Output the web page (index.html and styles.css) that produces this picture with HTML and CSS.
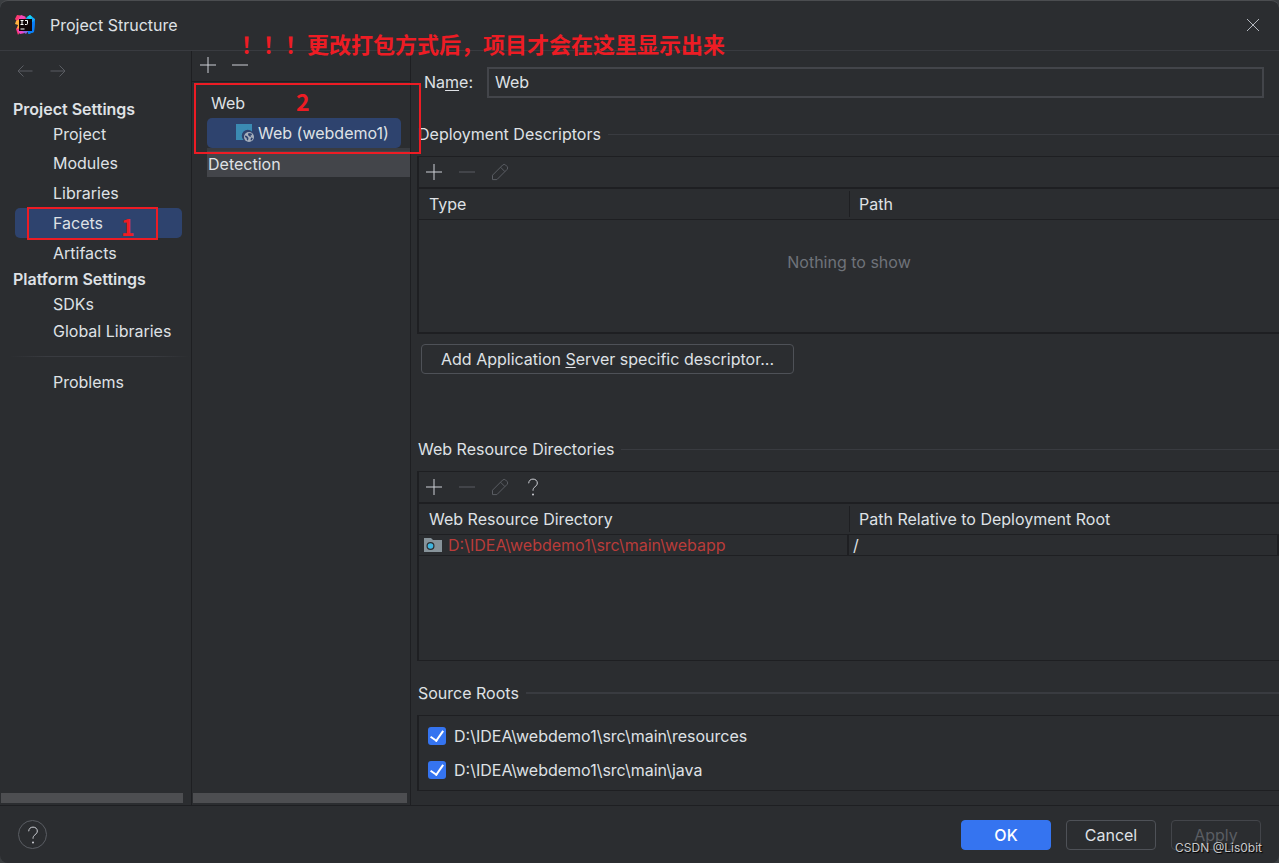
FILE: index.html
```html
<!DOCTYPE html>
<html lang="en">
<head>
<meta charset="utf-8">
<title>Project Structure</title>
<link rel="stylesheet" href="styles.css">
</head>
<body>
<svg class="defs" aria-hidden="true">
  <symbol id="plus" viewBox="0 0 18 18"><path d="M9 1v16M1 9h16"/></symbol>
  <symbol id="minus" viewBox="0 0 18 18"><path d="M1 9h16"/></symbol>
  <symbol id="pencil" viewBox="0 0 18 18"><path d="M1.500 12.200 11.700 2q1.500-1.300 2.900 0l1.500 1.500q1.300 1.500 0 2.900L5.900 16.600H1.500zM9.500 4.200l4.400 4.400"/></symbol>
  <symbol id="question" viewBox="0 0 18 18"><path d="M4.700 5.300C4.800 2.600 6.500 1.100 9 1.100s4.300 1.600 4.300 3.900c0 1.700-.8 2.600-2.200 3.700C9.700 9.800 9 10.700 9 12.700"/><circle class="dot" cx="9" cy="16.500" r="1"/></symbol>
</svg>
<div class="dialog">
  <header class="titlebar">
    <svg class="logo" viewBox="0 0 20 20" aria-hidden="true">
      <path fill="#fc3b70" d="M2 0 9 1 14 7 8 13 3 20 1 14 4 9 0 4z"/>
      <path fill="#ffb23e" d="M1 6 6 3 7 12 2 14 3 10 0 9z"/>
      <path fill="#f446b8" d="M6 0 11 2 8 5 3 5z"/>
      <path fill="#16a7f7" d="M11 3 15 0 20 4 19 17 14 19 11 15z"/>
      <path fill="#12d4ee" d="M12 2 15 0 17 2 15 5z"/>
      <path fill="#087cfa" d="M14 10 20 5 19 17 13 19z"/>
      <path fill="#ee45c5" d="M2 15 8 14 10 18 5 19z"/>
      <path fill="#8a63e8" d="M7 16h6l-2 3z"/>
      <path fill="#100508" d="M4 4h13v12H4z"/>
      <path class="logo-mark" d="M5.500 5.500h3M7 5.500v4M5.500 9.500h3M10 5.500h2.500v3q0 1-1 1H10M5.500 14h4"/>
    </svg>
    <h1 class="title">Project Structure</h1>
    <button class="close" type="button" aria-label="Close"><svg viewBox="0 0 14 14"><path d="m1 1 12 12M13 1 1 13"/></svg></button>
  </header>

  <div class="body">
    <nav class="sidebar" aria-label="Settings">
      <div class="history">
        <button type="button" aria-label="Back" disabled><svg viewBox="0 0 16 12"><path d="M6.500.5 1 6l5.500 5.500M1 6h14.500"/></svg></button>
        <button type="button" aria-label="Forward" disabled><svg viewBox="0 0 16 12"><path d="M9.500.5 15 6l-5.500 5.500M15 6H.5"/></svg></button>
      </div>
      <h2 class="nav-heading">Project Settings</h2>
      <a class="nav-item nav-item--short" href="#project">Project</a>
      <a class="nav-item" href="#modules">Modules</a>
      <a class="nav-item" href="#libraries">Libraries</a>
      <a class="nav-item nav-item--active" href="#facets" aria-current="page">Facets<span class="mark mark--one">1</span></a>
      <a class="nav-item" href="#artifacts">Artifacts</a>
      <h2 class="nav-heading">Platform Settings</h2>
      <a class="nav-item nav-item--short" href="#sdks">SDKs</a>
      <a class="nav-item nav-item--short" href="#global">Global Libraries</a>
      <hr class="nav-rule">
      <a class="nav-item nav-item--short" href="#problems">Problems</a>
      <div class="scrollbar"></div>
    </nav>

    <section class="facets" aria-label="Facets">
      <div class="facet-tools">
        <button class="tool" type="button" aria-label="Add facet"><svg><use href="#plus"/></svg></button>
        <button class="tool" type="button" aria-label="Remove facet"><svg><use href="#minus"/></svg></button>
      </div>
      <div class="tree">
        <a class="tree-root" href="#web">Web</a>
        <a class="tree-item" href="#webdemo1">
          <svg class="web-icon" viewBox="0 0 18 18" aria-hidden="true"><path fill="#3b8bb3" d="M0 0h16v7.500A6 6 0 0 0 7.500 16H0z"/><circle cx="13" cy="13" r="5" fill="#a7b0bc"/><path fill="#2e436e" d="m9 11.500 2 .5 1.500 2-.5 2.500-1-.5-.5-2L9 13zM12.500 9l3 .5.5 1.500-1.500.5.500 1.500-1.500-.5-1.500-1.500zM15 13.500l2 .5-1.500 2.500-1-.5z"/></svg>
          <span>Web (webdemo1)</span>
        </a>
        <a class="tree-detection" href="#detection">Detection</a>
      </div>
      <div class="scrollbar scrollbar--inset"></div>
      <span class="mark mark--two">2</span>
    </section>

    <main class="editor">
      <div class="field">
        <label for="name">Na<u>m</u>e:</label>
        <input id="name" type="text" value="Web">
      </div>

      <h2 class="group group--first">Deployment Descriptors</h2>
      <div class="panel panel--descriptors">
        <div class="panel-tools">
          <button class="tool" type="button" aria-label="Add descriptor"><svg><use href="#plus"/></svg></button>
          <button class="tool" type="button" aria-label="Remove descriptor" disabled><svg><use href="#minus"/></svg></button>
          <button class="tool" type="button" aria-label="Edit descriptor" disabled><svg><use href="#pencil"/></svg></button>
        </div>
        <table>
          <thead><tr><th><span>Type</span></th><th><span>Path</span></th></tr></thead>
        </table>
        <p class="empty">Nothing to show</p>
      </div>
      <button class="button button--wide" type="button">Add Application <u>S</u>erver specific descriptor...</button>

      <h2 class="group group--resources">Web Resource Directories</h2>
      <div class="panel panel--resources">
        <div class="panel-tools">
          <button class="tool" type="button" aria-label="Add directory"><svg><use href="#plus"/></svg></button>
          <button class="tool" type="button" aria-label="Remove directory" disabled><svg><use href="#minus"/></svg></button>
          <button class="tool" type="button" aria-label="Edit directory" disabled><svg><use href="#pencil"/></svg></button>
          <button class="tool" type="button" aria-label="Help"><svg><use href="#question"/></svg></button>
        </div>
        <table>
          <thead><tr><th><span>Web Resource Directory</span></th><th><span>Path Relative to Deployment Root</span></th></tr></thead>
          <tbody><tr>
            <td><div class="path"><svg class="folder" viewBox="0 0 18 14" aria-hidden="true"><path fill="#87939a" d="M0 0h7l2 2h9v12H0z"/><circle cx="6.500" cy="8" r="4" fill="#2b2d30"/><circle cx="6.500" cy="8" r="2.800" fill="#40b6e0"/></svg>D:\IDEA\webdemo1\src\main\webapp</div></td>
            <td>/</td>
          </tr></tbody>
        </table>
      </div>

      <h2 class="group group--roots">Source Roots</h2>
      <div class="panel panel--roots">
        <label class="root"><input type="checkbox" checked>D:\IDEA\webdemo1\src\main\resources</label>
        <label class="root"><input type="checkbox" checked>D:\IDEA\webdemo1\src\main\java</label>
      </div>
    </main>
  </div>

  <footer class="footer">
    <button class="help" type="button" aria-label="Help"><svg><use href="#question"/></svg></button>
    <button class="button button--primary" type="button">OK</button>
    <button class="button" type="button">Cancel</button>
    <button class="button" type="button" disabled>Apply</button>
  </footer>

  <p class="note" lang="zh-CN">！！！更改打包方式后，项目才会在这里显示出来</p>
  <p class="watermark">CSDN @Lis0bit</p>
</div>
</body>
</html>
```

FILE: styles.css
```css
:root {
  --bg: #2b2d30;
  --dark: #1e1f22;
  --line: #393b40;
  --outline: #4e5157;
  --text: #dfe1e5;
  --select: #2e436e;
  --blue: #3574f0;
  --red: #ed1c24;
}

* { box-sizing: border-box; }

body {
  margin: 0;
  background: #3a3d40;
  color: var(--text);
  font: 16px/20px Inter, "Noto Sans", sans-serif;
}

h1, h2, p { margin: 0; font-size: 16px; font-weight: 400; }
a { color: inherit; text-decoration: none; }
u { text-underline-offset: 2px; text-decoration-thickness: 1px; }
button, input { font: inherit; color: inherit; }
button { padding: 0; border: 0; background: none; }
svg { fill: none; stroke: none; }
.defs { position: absolute; width: 0; height: 0; }

.dialog {
  position: relative;
  display: flex;
  flex-direction: column;
  min-height: 100vh;
  background: var(--bg);
  border-top: 1px solid #4b4d50;
  border-radius: 8px;
  overflow: hidden;
}

/* Title bar */
.titlebar {
  display: flex;
  align-items: center;
  height: 50px;
  padding: 0 19px 2px 15px;
  border-bottom: 1px solid var(--line);
}
.logo { width: 20px; height: 20px; }
.logo-mark { stroke: #fff; }
.title { margin-left: 15px; }
.close { display: flex; margin-left: auto; }
.close svg { width: 14px; height: 14px; stroke: #b4b8bf; }

.body { display: flex; flex: 1; }

/* Left navigation */
.sidebar {
  display: flex;
  flex-direction: column;
  flex: 0 0 192px;
  border-right: 1px solid var(--dark);
}
.history {
  display: flex;
  align-items: flex-start;
  gap: 17px;
  height: 47px;
  padding: 14px 17px 0;
}
.history svg { display: block; width: 16px; height: 12px; stroke: #5a5d63; }
.nav-heading {
  padding-left: 13px;
  font-weight: 600;
  line-height: 23px;
}
.nav-item {
  position: relative;
  margin: 0 9px 0 15px;
  padding-left: 38px;
  border-radius: 5px;
  line-height: 30px;
  white-space: nowrap;
}
.nav-item--short { line-height: 27px; }
.nav-item--active { background: var(--select); }
.nav-rule {
  width: 180px;
  height: 1px;
  margin: 11px 0 12px 10px;
  border: 0;
  background: linear-gradient(90deg, transparent, var(--line) 20%, var(--line) 80%, transparent);
}
.scrollbar {
  height: 10px;
  margin: auto 8px 2px 1px;
  background: #4d4e51;
}
.scrollbar--inset { margin-right: 3px; }

/* Facet tree */
.facets {
  position: relative;
  display: flex;
  flex-direction: column;
  flex: 0 0 219px;
  border-right: 1px solid var(--dark);
}
.facet-tools {
  display: flex;
  height: 31px;
  border-bottom: 1px solid var(--dark);
}
.tool {
  display: flex;
  align-items: center;
  justify-content: center;
  width: 33px;
}
.facet-tools .tool { width: 32px; height: 28px; }
.tool svg { width: 18px; height: 18px; stroke: #ced0d6; }
.tool:disabled svg { stroke: #5a5d63; }
.dot { fill: #ced0d6; stroke: none; }
.tree {
  display: flex;
  flex-direction: column;
  padding: 6px 0 0 15px;
}
.tree-root { padding-left: 4px; line-height: 30px; }
.tree-item {
  display: flex;
  align-items: center;
  gap: 4px;
  height: 30px;
  margin-right: 9px;
  padding-left: 29px;
  border-radius: 5px;
  background: var(--select);
  white-space: nowrap;
}
.web-icon { flex: none; width: 18px; height: 18px; }
.tree-detection {
  padding-left: 1px;
  border-top: 3px solid #393b40;
  background: #43454a;
  line-height: 26px;
}

/* Facet editor */
.editor {
  display: flex;
  flex-direction: column;
  flex: 1;
  min-width: 0;
  padding: 16px 0 14px 6px;
}
.field {
  display: flex;
  align-items: center;
  gap: 14px;
  padding: 0 15px 0 7px;
}
.field label { line-height: 18px; padding-bottom: 2px; }
.field input {
  flex: 1;
  height: 31px;
  padding: 0 6px 2px;
  border: 2px solid #43454a;
  background: var(--bg);
}
.group {
  display: flex;
  align-items: center;
  gap: 7px;
  padding-left: 1px;
}
.group::after {
  content: "";
  flex: 1;
  height: 1px;
  background: var(--line);
}
.group--first { margin-top: 26px; }
.group--resources { margin-top: 65px; }
.group--roots { margin-top: 22px; }
.group--roots::after { height: 2px; }

.panel {
  margin-top: 12px;
  border: 1px solid var(--dark);
  border-left-width: 2px;
  border-right: 0;
}
.panel--descriptors { min-height: 178px; border-bottom-width: 2px; }
.panel--resources { min-height: 190px; }
.panel--roots { padding: 3px 9px; }
.panel-tools {
  display: flex;
  height: 32px;
  border-bottom: 2px solid var(--dark);
}
.panel-tools .tool { width: 29px; margin-right: 4px; }
table {
  width: 100%;
  border-collapse: separate;
  border-spacing: 0;
  table-layout: fixed;
}
th, td {
  padding: 0;
  border-bottom: 1px solid var(--dark);
  font-weight: 400;
  text-align: left;
}
th { height: 31px; }
th span { display: block; padding-left: 10px; line-height: 26px; }
th + th span { border-left: 1px solid var(--dark); padding-left: 9px; }
td { padding-left: 5px; border-right: 2px solid var(--dark); line-height: 20px; }
td + td { padding-left: 4px; }
.path { display: flex; align-items: center; gap: 6px; color: #b93c3a; }
.folder { width: 18px; height: 14px; }
.empty { padding-top: 32px; color: #6f737a; text-align: center; }

.root {
  display: flex;
  align-items: center;
  gap: 8px;
  line-height: 34px;
}
.root input {
  display: grid;
  place-items: center;
  width: 18px;
  height: 18px;
  margin: 0;
  appearance: none;
  border-radius: 3px;
  background: var(--blue);
}
.root input:checked::after {
  content: "";
  width: 6px;
  height: 11px;
  margin-bottom: 3px;
  border: solid #fff;
  border-width: 0 2px 2px 0;
  transform: rotate(35deg);
}

/* Buttons */
.button {
  min-width: 90px;
  height: 30px;
  border: 1px solid var(--outline);
  border-radius: 4px;
}
.button--wide { align-self: flex-start; margin: 10px 0 0 4px; padding: 0 19px; }
.button--primary { border-color: var(--blue); background: var(--blue); color: #fff; font-weight: 500; }
.button:disabled { border-color: #43454a; color: #5a5d63; }

.footer {
  display: flex;
  align-items: center;
  gap: 15px;
  height: 58px;
  padding: 0 18px;
  border-top: 1px solid var(--dark);
}
.help {
  display: flex;
  align-items: center;
  justify-content: center;
  width: 29px;
  height: 29px;
  margin-right: auto;
  border: 1px solid #5a5d63;
  border-radius: 50%;
}
.help svg { width: 18px; height: 18px; stroke: #ced0d6; }

/* Red annotations laid over the dialog */
.mark {
  position: absolute;
  border: 2px solid var(--red);
  color: var(--red);
  font-family: "Noto Sans CJK SC", sans-serif;
  font-size: 23px;
  font-weight: 700;
  line-height: 30px;
}
.mark--one { inset: -1px 24px -2px 12px; padding: 2px 0 0 92px; }
.mark--two { top: 32px; left: 2px; right: -11px; height: 71px; padding: 1px 0 0 100px; }
.note {
  position: absolute;
  top: 26px;
  left: 241px;
  color: var(--red);
  font: 700 22px/32px "Noto Sans CJK SC", sans-serif;
}
.watermark {
  position: absolute;
  right: 17px;
  bottom: 6px;
  color: #c8c9cb;
  font: 12px/18px Inter, sans-serif;
  text-shadow: 1px 1px 1px #000;
}
```
